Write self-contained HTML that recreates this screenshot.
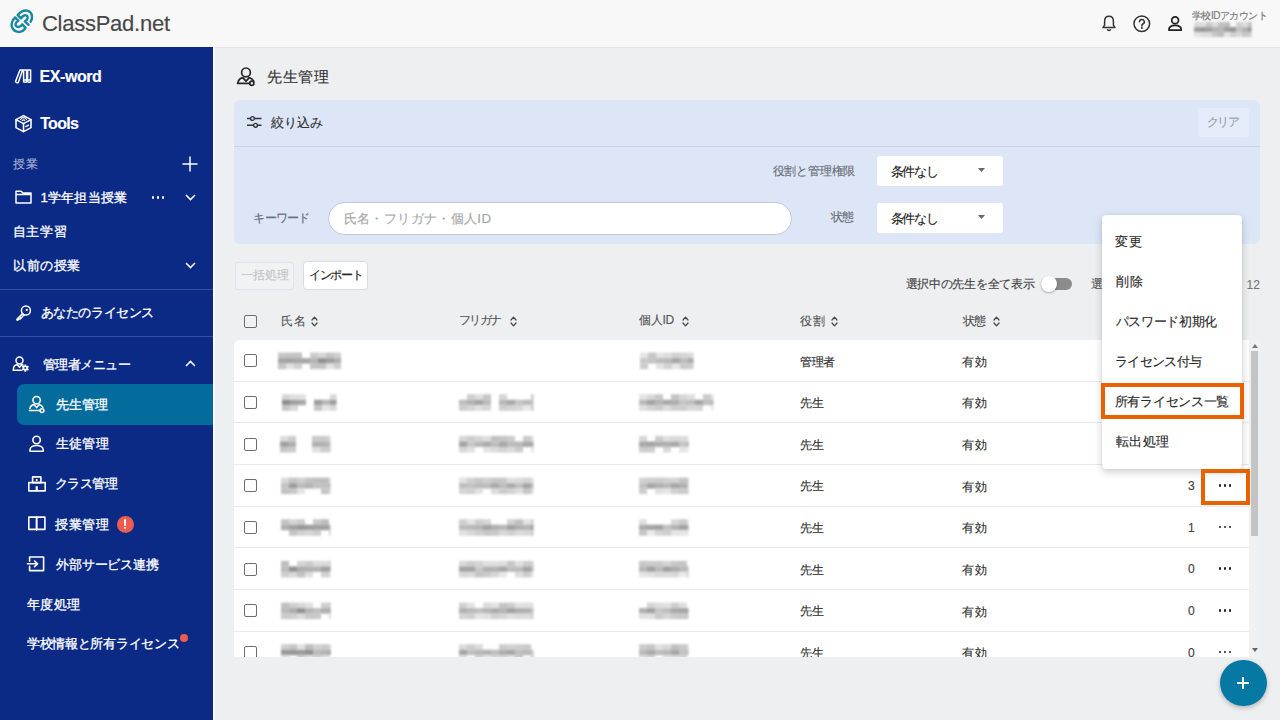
<!DOCTYPE html>
<html lang="ja">
<head>
<meta charset="utf-8">
<style>
*{box-sizing:border-box;margin:0;padding:0}
html,body{width:1280px;height:720px;overflow:hidden}
body{font-family:"Liberation Sans",sans-serif;background:#eeeff1;color:#333;position:relative}
.a{position:absolute}
.t{position:absolute;white-space:nowrap;line-height:1;-webkit-text-stroke:0.15px currentColor}
svg{position:absolute;overflow:visible}
.cb{position:absolute;width:13px;height:13px;border:1.7px solid #6d6d6d;border-radius:2px;background:#fff}
.rowline{position:absolute;left:0;width:1015px;height:1px;background:#e8e9ec}
.cell{font-size:12px;color:#333}
.num{font-size:12px;color:#444}
.dots{position:absolute;width:14px;height:3px}
.dots i{position:absolute;top:0.1px;width:2.7px;height:2.7px;border-radius:50%;background:#1e1e1e}
.dots i:nth-child(1){left:0.1px} .dots i:nth-child(2){left:5.1px} .dots i:nth-child(3){left:10.1px}
.bl{position:absolute;height:8px;background:linear-gradient(90deg,#b5b5b5,#a0a0a0 30%,#b8b8b8 55%,#a5a5a5 80%,#bdbdbd);filter:blur(1.8px);opacity:.9}
.hl{position:absolute;border:4.75px solid #ea6200}
</style>
</head>
<body>
<!-- header -->
<div class="a" style="left:0;top:0;width:1280px;height:47px;background:#f8f8f9;box-shadow:0 0.5px 1.5px rgba(0,0,0,.10)"></div>
<svg style="left:0;top:0" width="44" height="44" viewBox="0 0 44 44">
  <g fill="none" stroke="#1a88a3" stroke-width="2.45" stroke-linecap="round" stroke-linejoin="round">
    <path id="lk" d="M30.7 21.6 C33.2 17.6 32.3 12.3 28 10.9 C24.6 9.8 21 11.4 17.7 15.1 L21 18.4 C22.5 16 24.8 14.4 26.6 15.6 C28.3 16.8 28 19.6 24.9 21.4 L28.5 24.9"/>
    <path d="M15.1 17.5 C11.5 20.5 10.8 25.5 12.6 28.5 C14.6 31.8 19.5 32.8 22.5 31 C23.8 30.2 24.8 29 25.6 27.8 L22.2 24.3 C20.8 26.5 18.3 27.6 16.6 26.5 C14.8 25.3 15.2 22.3 18.4 20.6 Z"/>
  </g>
</svg>
<svg style="left:1102px;top:15px" width="14" height="17" viewBox="0 0 14 17">
  <path d="M7 1.2 C4 1.2 2.6 3.6 2.6 6.4 V10.2 L1 12.6 H13 L11.4 10.2 V6.4 C11.4 3.6 10 1.2 7 1.2 Z" fill="none" stroke="#333" stroke-width="1.5" stroke-linejoin="round"/>
  <path d="M5.3 14.2 a1.8 1.8 0 0 0 3.4 0" fill="none" stroke="#333" stroke-width="1.5"/>
</svg>
<svg style="left:1133px;top:14.5px" width="18" height="18" viewBox="0 0 18 18">
  <circle cx="8.8" cy="8.8" r="7.8" fill="none" stroke="#333" stroke-width="1.5"/>
  <path d="M6.5 6.8 a2.4 2.4 0 1 1 3.4 2.2 c-.7.4-1 .8-1 1.6 v.4" fill="none" stroke="#333" stroke-width="1.5" stroke-linecap="round"/>
  <circle cx="8.9" cy="13" r="0.95" fill="#333"/>
</svg>
<svg style="left:1168px;top:16px" width="15" height="15" viewBox="0 0 15 15">
  <circle cx="7.1" cy="4.3" r="3.4" fill="none" stroke="#222" stroke-width="1.7"/>
  <path d="M0.9 14.1 C0.9 10.8 3.6 9.4 7.1 9.4 C10.6 9.4 13.3 10.8 13.3 14.1 Z" fill="none" stroke="#222" stroke-width="1.7" stroke-linejoin="round"/>
</svg>
<svg style="left:0;top:0" width="1280" height="46" viewBox="0 0 1280 46"><g filter="url(#bf2)"><defs><filter id="bf2" x="-10%" y="-50%" width="120%" height="200%"><feGaussianBlur stdDeviation="1.2"/></filter></defs><rect x="1194.0" y="22.0" width="6.05" height="5.05" fill="rgb(219,219,219)"/><rect x="1194.0" y="27.0" width="6.05" height="5.05" fill="rgb(158,158,158)"/><rect x="1194.0" y="32.0" width="6.05" height="5.05" fill="rgb(228,228,228)"/><rect x="1200.0" y="22.0" width="6.05" height="5.05" fill="rgb(222,222,222)"/><rect x="1200.0" y="27.0" width="6.05" height="5.05" fill="rgb(154,154,154)"/><rect x="1200.0" y="32.0" width="6.05" height="5.05" fill="rgb(220,220,220)"/><rect x="1206.0" y="22.0" width="6.05" height="5.05" fill="rgb(199,199,199)"/><rect x="1206.0" y="27.0" width="6.05" height="5.05" fill="rgb(162,162,162)"/><rect x="1206.0" y="32.0" width="6.05" height="5.05" fill="rgb(220,220,220)"/><rect x="1212.0" y="22.0" width="6.05" height="5.05" fill="rgb(220,220,220)"/><rect x="1212.0" y="27.0" width="6.05" height="5.05" fill="rgb(180,180,180)"/><rect x="1212.0" y="32.0" width="6.05" height="5.05" fill="rgb(199,199,199)"/><rect x="1218.0" y="22.0" width="6.05" height="5.05" fill="rgb(194,194,194)"/><rect x="1218.0" y="27.0" width="6.05" height="5.05" fill="rgb(183,183,183)"/><rect x="1218.0" y="32.0" width="6.05" height="5.05" fill="rgb(190,190,190)"/><rect x="1224.0" y="22.0" width="6.05" height="5.05" fill="rgb(189,189,189)"/><rect x="1224.0" y="27.0" width="6.05" height="5.05" fill="rgb(160,160,160)"/><rect x="1224.0" y="32.0" width="6.05" height="5.05" fill="rgb(227,227,227)"/><rect x="1230.0" y="27.0" width="6.05" height="5.05" fill="rgb(151,151,151)"/><rect x="1230.0" y="32.0" width="6.05" height="5.05" fill="rgb(207,207,207)"/><rect x="1236.0" y="22.0" width="6.05" height="5.05" fill="rgb(209,209,209)"/><rect x="1236.0" y="27.0" width="6.05" height="5.05" fill="rgb(195,195,195)"/><rect x="1236.0" y="32.0" width="6.05" height="5.05" fill="rgb(217,217,217)"/><rect x="1242.0" y="22.0" width="6.05" height="5.05" fill="rgb(221,221,221)"/><rect x="1242.0" y="27.0" width="6.05" height="5.05" fill="rgb(178,178,178)"/><rect x="1242.0" y="32.0" width="6.05" height="5.05" fill="rgb(198,198,198)"/><rect x="1248.0" y="22.0" width="3.55" height="5.05" fill="rgb(191,191,191)"/><rect x="1248.0" y="27.0" width="3.55" height="5.05" fill="rgb(152,152,152)"/><rect x="1248.0" y="32.0" width="3.55" height="5.05" fill="rgb(203,203,203)"/></g></svg>

<!-- sidebar -->
<div class="a" style="left:0;top:47px;width:213px;height:673px;background:#0b2a86"></div>
<div class="a" style="left:213px;top:47px;width:2px;height:673px;background:#fbfbfc"></div>
<svg style="left:14px;top:68px" width="18" height="16" viewBox="0 0 18 16">
  <g fill="none" stroke="#fff" stroke-width="1.5" stroke-linejoin="round">
    <path d="M1.5 13.6 L6 2 H8.6 L4.4 14.2 C3.8 15 2 15 1.5 13.6 Z"/>
    <path d="M9.6 2 H12.6 V13.6 C12.6 14.6 9.6 14.6 9.6 13.6 Z"/>
    <path d="M13.6 2 H16.6 V13.6 C16.6 14.6 13.6 14.6 13.6 13.6 Z"/>
    <path d="M9.6 12 H12.6 M13.6 12 H16.6"/>
  </g>
</svg>
<svg style="left:0;top:100px" width="40" height="40" viewBox="0 100 40 40">
  <g fill="none" stroke="#fff" stroke-width="1.6" stroke-linejoin="round" stroke-linecap="round">
    <path d="M23.5 115.6 L31 119.6 V127.6 L23.5 131.6 L16 127.6 V119.6 Z"/>
    <path d="M16 119.6 L23.5 123.6 L31 119.6"/>
    <path d="M23.5 123.6 V131.6"/>
    <path d="M20.6 119.4 A3.2 3.2 0 0 1 26.4 119.4" stroke-width="1.3"/>
    <path d="M22.3 120.5 A1.4 1.4 0 0 1 24.7 120.5" stroke-width="1.3"/>
    <path d="M25.8 126.6 L28.6 125.1" stroke-width="1.4"/>
  </g>
</svg>
<svg style="left:182px;top:155.5px" width="16" height="16" viewBox="0 0 16 16"><path d="M8 0.5 V15.5 M0.5 8 H15.5" stroke="#fff" stroke-width="1.5"/></svg>
<svg style="left:15px;top:190px" width="17" height="14" viewBox="0 0 17 14">
  <path d="M1 1.2 H6.2 L7.8 3 H16 V13 H1 Z M1 4.6 H16" fill="none" stroke="#fff" stroke-width="1.5" stroke-linejoin="round"/>
</svg>
<div class="dots" style="left:151.5px;top:196px"><i style="background:#fff"></i><i style="background:#fff"></i><i style="background:#fff"></i></div>
<svg style="left:184.5px;top:193.5px" width="11" height="7" viewBox="0 0 11 7"><path d="M1 1 L5.5 5.6 L10 1" fill="none" stroke="#fff" stroke-width="1.5"/></svg>
<svg style="left:184.5px;top:261.5px" width="11" height="7" viewBox="0 0 11 7"><path d="M1 1 L5.5 5.6 L10 1" fill="none" stroke="#fff" stroke-width="1.5"/></svg>
<div class="a" style="left:0;top:289px;width:213px;height:1px;background:#3550a3"></div>
<svg style="left:14px;top:304px" width="18" height="18" viewBox="0 0 18 18">
  <g fill="none" stroke="#fff" stroke-width="1.5" stroke-linejoin="round" stroke-linecap="round">
    <circle cx="11.9" cy="6.5" r="4.5"/>
    <path d="M8.6 9.6 L3.1 15.1 C2.5 15.7 3 16.5 3.7 16.2 L5.6 14.9 L6.4 14.9 L6.8 13.8 L7.8 13.8 L8.2 12.7 L10.3 10.9"/>
  </g>
  <circle cx="12.8" cy="5.9" r="1.1" fill="#fff"/>
</svg>
<div class="a" style="left:0;top:336px;width:213px;height:1px;background:#3550a3"></div>
<svg style="left:12px;top:355px" width="18" height="18" viewBox="0 0 18 18">
  <g fill="none" stroke="#fff" stroke-width="1.5" stroke-linejoin="round" stroke-linecap="round">
    <circle cx="7.5" cy="5.6" r="3.5"/>
    <path d="M1.4 15.2 V14.2 C1.4 11.6 3.2 10 5.4 9.6"/>
    <path d="M9.6 9.6 C10.2 9.7 10.7 9.9 11.1 10.1"/>
    <path d="M5.2 9.8 L7.5 12.1 L9.8 9.8"/>
    <path d="M1.4 15.2 H9.3"/>
  </g>
  <g transform="translate(13.3,13.1)" fill="#fff">
    <circle r="2.7"/>
    <rect x="-0.9" y="-3.7" width="1.8" height="7.4" rx="0.4"/>
    <rect x="-0.9" y="-3.7" width="1.8" height="7.4" rx="0.4" transform="rotate(60)"/>
    <rect x="-0.9" y="-3.7" width="1.8" height="7.4" rx="0.4" transform="rotate(120)"/>
    <circle r="1" fill="#0b2a86"/>
  </g>
</svg>
<svg style="left:21px;top:356px;display:none" width="1" height="1"></svg>
<svg style="left:184.5px;top:359.5px" width="11" height="7" viewBox="0 0 11 7"><path d="M1 6 L5.5 1.4 L10 6" fill="none" stroke="#fff" stroke-width="1.5"/></svg>
<div class="a" style="left:17px;top:384px;width:196px;height:40.5px;background:#046c9d;border-radius:7px 0 0 7px"></div>
<svg style="left:28px;top:395px" width="18" height="18" viewBox="0 0 18 18">
  <g fill="none" stroke="#fff" stroke-width="1.5" stroke-linejoin="round" stroke-linecap="round">
    <circle cx="8.6" cy="5.2" r="3.7"/>
    <path d="M1.9 13.6 C2.2 11.3 3.9 9.8 6.1 9.4"/>
    <path d="M11.1 9.4 C12.9 9.8 14.2 10.8 14.9 12.4"/>
    <path d="M5.9 9.5 L8.6 12.6 L11.3 9.5"/>
    <path d="M1.4 15.6 H12.1"/>
    <circle cx="14" cy="15.6" r="1.9"/>
  </g>
</svg>
<svg style="left:28px;top:435px" width="18" height="18" viewBox="0 0 18 18">
  <g fill="none" stroke="#fff" stroke-width="1.6" stroke-linejoin="round">
    <circle cx="8.6" cy="5" r="3.7"/>
    <path d="M2 16.2 V14.9 C2 12.2 4.9 10.5 8.6 10.5 C12.3 10.5 15.2 12.2 15.2 14.9 V16.2 Z"/>
  </g>
</svg>
<svg style="left:28px;top:476px" width="18" height="16" viewBox="0 0 18 16">
  <g fill="none" stroke="#fff" stroke-width="1.6" stroke-linejoin="round">
    <path d="M4.6 0.9 H12.9 V6.6 H4.6 Z"/>
    <path d="M0.8 6.6 H17.2 V14.9 H0.8 Z"/>
  </g>
  <circle cx="8.7" cy="4.1" r="1.05" fill="#fff"/>
  <path d="M8.7 10.2 V14.9" stroke="#fff" stroke-width="2.2"/>
</svg>
<svg style="left:28px;top:516px" width="18" height="17" viewBox="0 0 18 17">
  <g fill="none" stroke="#fff" stroke-width="1.6" stroke-linejoin="round">
    <path d="M0.8 1.1 H8.6 V13.4 H0.8 Z"/>
    <path d="M8.6 1.1 H16.9 V13.4 H8.6 Z"/>
  </g>
  <path d="M7.4 13.4 H9.8 L8.6 15.3 Z" fill="#fff"/>
</svg>
<div class="a" style="left:116.7px;top:515.8px;width:17px;height:17px;border-radius:50%;background:#ee5b50"></div>
<div class="a" style="left:124.2px;top:519.3px;width:2px;height:6.5px;background:#fff;border-radius:1px"></div>
<div class="a" style="left:124.1px;top:526.8px;width:2.2px;height:2.2px;background:#fff;border-radius:50%"></div>
<svg style="left:26px;top:555px" width="20" height="18" viewBox="0 0 20 18">
  <g fill="none" stroke="#fff" stroke-width="1.6" stroke-linejoin="round" stroke-linecap="round">
    <path d="M3.6 6.2 V2 H17.6 V15.6 H3.6 V11.4"/>
    <path d="M1.4 8.8 H11.4 M8.6 6 L11.5 8.8 L8.6 11.6"/>
  </g>
</svg>
<div class="a" style="left:179.7px;top:634.3px;width:8px;height:8px;border-radius:50%;background:#ec5a50"></div>

<!-- main title -->
<svg style="left:236px;top:65px" width="20" height="21" viewBox="0 0 20 21">
  <g fill="none" stroke="#262626" stroke-width="1.7" stroke-linejoin="round" stroke-linecap="round">
    <circle cx="10" cy="7.4" r="4.4"/>
    <path d="M1.9 18 C2.3 15.2 4.2 13.3 6.9 12.7"/>
    <path d="M13.1 12.7 C15.3 13.2 16.9 14.4 17.7 16.1"/>
    <path d="M6.9 12.9 L10 16.1 L13.1 12.9"/>
    <path d="M1.5 18.3 H13.6"/>
    <circle cx="15.8" cy="18.3" r="2.1"/>
  </g>
</svg>

<!-- filter panel -->
<div class="a" style="left:234px;top:100px;width:1026px;height:143.5px;background:#dce6f7;border-radius:6px"></div>
<div class="a" style="left:234px;top:146px;width:1026px;height:1px;background:#c8d3e6"></div>
<svg style="left:247px;top:115.5px" width="15" height="12" viewBox="0 0 15 12">
  <g fill="none" stroke="#333" stroke-width="1.4">
    <path d="M0 2.5 H3.6 M7.4 2.5 H14.5"/><circle cx="5.5" cy="2.5" r="1.9"/>
    <path d="M0 9.3 H6.6 M10.4 9.3 H14.5"/><circle cx="8.5" cy="9.3" r="1.9"/>
  </g>
</svg>
<div class="a" style="left:1198px;top:108px;width:51px;height:29px;background:#e4ecfa;border-radius:3px"></div>
<div class="a" style="left:877px;top:156px;width:126px;height:30px;background:#fff;border-radius:3px"></div>
<svg style="left:978px;top:168.2px" width="7" height="4" viewBox="0 0 7 4"><path d="M0 0 H7 L3.5 4 Z" fill="#666"/></svg>
<div class="a" style="left:328px;top:201.5px;width:464px;height:33px;background:#fff;border:1px solid #c3c8d0;border-radius:17px"></div>
<div class="a" style="left:877px;top:203px;width:126px;height:30px;background:#fff;border-radius:3px"></div>
<svg style="left:978px;top:215px" width="7" height="4" viewBox="0 0 7 4"><path d="M0 0 H7 L3.5 4 Z" fill="#666"/></svg>

<!-- buttons -->
<div class="a" style="left:235px;top:261.5px;width:59px;height:28px;background:#f1f2f4;border:1px solid #e3e4e7;border-radius:3px"></div>
<div class="a" style="left:303px;top:260.5px;width:65px;height:29px;background:#fff;border:1px solid #dadbde;border-radius:4px"></div>
<div class="a" style="left:1041px;top:277.5px;width:31px;height:12px;border-radius:6px;background:#8c8c8c"></div>
<div class="a" style="left:1041px;top:276.2px;width:16px;height:16px;border-radius:50%;background:#fff;box-shadow:0 1px 2.5px rgba(0,0,0,.3)"></div>

<!-- table header -->
<div class="cb" style="left:244px;top:315.3px;background:#f2f2f2"></div>
<svg style="left:311px;top:316px" width="7" height="11" viewBox="0 0 7 11"><path d="M1 4 L3.5 1.2 L6 4 M1 7 L3.5 9.8 L6 7" fill="none" stroke="#444" stroke-width="1.25" stroke-linecap="round" stroke-linejoin="round"/></svg>
<svg style="left:509.5px;top:316px" width="7" height="11" viewBox="0 0 7 11"><path d="M1 4 L3.5 1.2 L6 4 M1 7 L3.5 9.8 L6 7" fill="none" stroke="#444" stroke-width="1.25" stroke-linecap="round" stroke-linejoin="round"/></svg>
<svg style="left:681.5px;top:316px" width="7" height="11" viewBox="0 0 7 11"><path d="M1 4 L3.5 1.2 L6 4 M1 7 L3.5 9.8 L6 7" fill="none" stroke="#444" stroke-width="1.25" stroke-linecap="round" stroke-linejoin="round"/></svg>
<svg style="left:830.5px;top:316px" width="7" height="11" viewBox="0 0 7 11"><path d="M1 4 L3.5 1.2 L6 4 M1 7 L3.5 9.8 L6 7" fill="none" stroke="#444" stroke-width="1.25" stroke-linecap="round" stroke-linejoin="round"/></svg>
<svg style="left:993px;top:316px" width="7" height="11" viewBox="0 0 7 11"><path d="M1 4 L3.5 1.2 L6 4 M1 7 L3.5 9.8 L6 7" fill="none" stroke="#444" stroke-width="1.25" stroke-linecap="round" stroke-linejoin="round"/></svg>

<!-- table -->
<div class="a" style="left:234px;top:340px;width:1015px;height:317px;overflow:hidden;background:#fff;border-radius:6px 0 0 0">
<div class="cb" style="left:10px;top:14.33px"></div>
<div id="c_role0" class="t cell" style="left:566.00px;top:15.58px;letter-spacing:-0.350px">管理者</div>
<div id="c_stat" class="t cell" style="left:728.00px;top:15.78px;letter-spacing:1.400px">有効</div>
<div class="rowline" style="top:40.67px"></div>
<div class="cb" style="left:10px;top:56.00px"></div>
<div id="c_role1" class="t cell" style="left:566.00px;top:57.00px;letter-spacing:0.000px">先生</div>
<div class="t cell" style="left:728.00px;top:57.45px;letter-spacing:1.400px">有効</div>
<div class="rowline" style="top:82.33px"></div>
<div class="cb" style="left:10px;top:97.66px"></div>
<div class="t cell" style="left:566.00px;top:98.66px;letter-spacing:0.000px">先生</div>
<div class="t cell" style="left:728.00px;top:99.11px;letter-spacing:1.400px">有効</div>
<div class="rowline" style="top:124.00px"></div>
<div class="cb" style="left:10px;top:139.33px"></div>
<div class="t cell" style="left:566.00px;top:140.33px;letter-spacing:0.000px">先生</div>
<div class="t cell" style="left:728.00px;top:140.78px;letter-spacing:1.400px">有効</div>
<div class="t num" style="left:954.00px;top:140.06px">3</div>
<div class="dots" style="left:984.60px;top:143.83px"><i></i><i></i><i></i></div>
<div class="rowline" style="top:165.67px"></div>
<div class="cb" style="left:10px;top:181.00px"></div>
<div class="t cell" style="left:566.00px;top:182.00px;letter-spacing:0.000px">先生</div>
<div class="t cell" style="left:728.00px;top:182.45px;letter-spacing:1.400px">有効</div>
<div id="c_num" class="t num" style="left:954.00px;top:181.72px">1</div>
<div class="dots" style="left:984.60px;top:185.50px"><i></i><i></i><i></i></div>
<div class="rowline" style="top:207.33px"></div>
<div class="cb" style="left:10px;top:222.66px"></div>
<div class="t cell" style="left:566.00px;top:223.66px;letter-spacing:0.000px">先生</div>
<div class="t cell" style="left:728.00px;top:224.11px;letter-spacing:1.400px">有効</div>
<div class="t num" style="left:954.00px;top:223.39px">0</div>
<div class="dots" style="left:984.60px;top:227.16px"><i></i><i></i><i></i></div>
<div class="rowline" style="top:249.00px"></div>
<div class="cb" style="left:10px;top:264.33px"></div>
<div class="t cell" style="left:566.00px;top:265.33px;letter-spacing:0.000px">先生</div>
<div class="t cell" style="left:728.00px;top:265.78px;letter-spacing:1.400px">有効</div>
<div class="t num" style="left:954.00px;top:265.06px">0</div>
<div class="dots" style="left:984.60px;top:268.83px"><i></i><i></i><i></i></div>
<div class="rowline" style="top:290.67px"></div>
<div class="cb" style="left:10px;top:306.00px"></div>
<div class="t cell" style="left:566.00px;top:307.00px;letter-spacing:0.000px">先生</div>
<div class="t cell" style="left:728.00px;top:307.45px;letter-spacing:1.400px">有効</div>
<div class="t num" style="left:954.00px;top:306.72px">0</div>
<div class="dots" style="left:984.60px;top:310.50px"><i></i><i></i><i></i></div>
</div>

<svg style="left:0;top:0" width="1280" height="720" viewBox="0 0 1280 720"><defs><filter id="bf" x="-5%" y="-50%" width="110%" height="200%"><feGaussianBlur stdDeviation="1.3"/></filter><clipPath id="tc"><rect x="234" y="340" width="1015" height="317"/></clipPath></defs><g clip-path="url(#tc)" filter="url(#bf)"><rect x="278.0" y="352.6" width="8.05" height="5.55" fill="rgb(197,197,197)"/><rect x="278.0" y="358.1" width="8.05" height="5.55" fill="rgb(165,165,165)"/><rect x="278.0" y="363.6" width="8.05" height="5.55" fill="rgb(197,197,197)"/><rect x="286.0" y="352.6" width="8.05" height="5.55" fill="rgb(194,194,194)"/><rect x="286.0" y="358.1" width="8.05" height="5.55" fill="rgb(163,163,163)"/><rect x="286.0" y="363.6" width="8.05" height="5.55" fill="rgb(225,225,225)"/><rect x="294.0" y="352.6" width="8.05" height="5.55" fill="rgb(193,193,193)"/><rect x="294.0" y="358.1" width="8.05" height="5.55" fill="rgb(167,167,167)"/><rect x="294.0" y="363.6" width="8.05" height="5.55" fill="rgb(208,208,208)"/><rect x="302.0" y="358.1" width="8.05" height="5.55" fill="rgb(167,167,167)"/><rect x="310.0" y="352.6" width="8.05" height="5.55" fill="rgb(202,202,202)"/><rect x="310.0" y="358.1" width="8.05" height="5.55" fill="rgb(180,180,180)"/><rect x="310.0" y="363.6" width="8.05" height="5.55" fill="rgb(196,196,196)"/><rect x="318.0" y="352.6" width="8.05" height="5.55" fill="rgb(213,213,213)"/><rect x="318.0" y="358.1" width="8.05" height="5.55" fill="rgb(143,143,143)"/><rect x="318.0" y="363.6" width="8.05" height="5.55" fill="rgb(195,195,195)"/><rect x="326.0" y="352.6" width="8.05" height="5.55" fill="rgb(196,196,196)"/><rect x="326.0" y="358.1" width="8.05" height="5.55" fill="rgb(158,158,158)"/><rect x="326.0" y="363.6" width="8.05" height="5.55" fill="rgb(227,227,227)"/><rect x="334.0" y="352.6" width="7.05" height="5.55" fill="rgb(207,207,207)"/><rect x="334.0" y="358.1" width="7.05" height="5.55" fill="rgb(175,175,175)"/><rect x="334.0" y="363.6" width="7.05" height="5.55" fill="rgb(204,204,204)"/><rect x="640.0" y="352.6" width="8.05" height="5.55" fill="rgb(228,228,228)"/><rect x="640.0" y="358.1" width="8.05" height="5.55" fill="rgb(200,200,200)"/><rect x="640.0" y="363.6" width="8.05" height="5.55" fill="rgb(203,203,203)"/><rect x="648.0" y="352.6" width="8.05" height="5.55" fill="rgb(196,196,196)"/><rect x="648.0" y="358.1" width="8.05" height="5.55" fill="rgb(196,196,196)"/><rect x="656.0" y="352.6" width="8.05" height="5.55" fill="rgb(226,226,226)"/><rect x="656.0" y="358.1" width="8.05" height="5.55" fill="rgb(187,187,187)"/><rect x="656.0" y="363.6" width="8.05" height="5.55" fill="rgb(226,226,226)"/><rect x="664.0" y="352.6" width="8.05" height="5.55" fill="rgb(221,221,221)"/><rect x="664.0" y="358.1" width="8.05" height="5.55" fill="rgb(183,183,183)"/><rect x="664.0" y="363.6" width="8.05" height="5.55" fill="rgb(208,208,208)"/><rect x="672.0" y="352.6" width="8.05" height="5.55" fill="rgb(207,207,207)"/><rect x="672.0" y="358.1" width="8.05" height="5.55" fill="rgb(165,165,165)"/><rect x="672.0" y="363.6" width="8.05" height="5.55" fill="rgb(230,230,230)"/><rect x="680.0" y="352.6" width="8.05" height="5.55" fill="rgb(213,213,213)"/><rect x="680.0" y="358.1" width="8.05" height="5.55" fill="rgb(188,188,188)"/><rect x="680.0" y="363.6" width="8.05" height="5.55" fill="rgb(201,201,201)"/><rect x="688.0" y="352.6" width="5.55" height="5.55" fill="rgb(218,218,218)"/><rect x="688.0" y="358.1" width="5.55" height="5.55" fill="rgb(170,170,170)"/><rect x="688.0" y="363.6" width="5.55" height="5.55" fill="rgb(206,206,206)"/><rect x="282.0" y="394.2" width="8.05" height="5.55" fill="rgb(214,214,214)"/><rect x="282.0" y="399.7" width="8.05" height="5.55" fill="rgb(142,142,142)"/><rect x="282.0" y="405.2" width="8.05" height="5.55" fill="rgb(197,197,197)"/><rect x="290.0" y="394.2" width="8.05" height="5.55" fill="rgb(224,224,224)"/><rect x="290.0" y="399.7" width="8.05" height="5.55" fill="rgb(160,160,160)"/><rect x="290.0" y="405.2" width="8.05" height="5.55" fill="rgb(215,215,215)"/><rect x="298.0" y="394.2" width="8.05" height="5.55" fill="rgb(225,225,225)"/><rect x="298.0" y="399.7" width="8.05" height="5.55" fill="rgb(169,169,169)"/><rect x="314.0" y="399.7" width="8.05" height="5.55" fill="rgb(157,157,157)"/><rect x="314.0" y="405.2" width="8.05" height="5.55" fill="rgb(197,197,197)"/><rect x="322.0" y="399.7" width="8.05" height="5.55" fill="rgb(184,184,184)"/><rect x="322.0" y="405.2" width="8.05" height="5.55" fill="rgb(229,229,229)"/><rect x="330.0" y="394.2" width="6.55" height="5.55" fill="rgb(216,216,216)"/><rect x="330.0" y="399.7" width="6.55" height="5.55" fill="rgb(158,158,158)"/><rect x="330.0" y="405.2" width="6.55" height="5.55" fill="rgb(215,215,215)"/><rect x="459.0" y="399.7" width="8.05" height="5.55" fill="rgb(189,189,189)"/><rect x="459.0" y="405.2" width="8.05" height="5.55" fill="rgb(204,204,204)"/><rect x="467.0" y="394.2" width="8.05" height="5.55" fill="rgb(205,205,205)"/><rect x="467.0" y="399.7" width="8.05" height="5.55" fill="rgb(178,178,178)"/><rect x="467.0" y="405.2" width="8.05" height="5.55" fill="rgb(212,212,212)"/><rect x="475.0" y="394.2" width="8.05" height="5.55" fill="rgb(223,223,223)"/><rect x="475.0" y="399.7" width="8.05" height="5.55" fill="rgb(165,165,165)"/><rect x="475.0" y="405.2" width="8.05" height="5.55" fill="rgb(222,222,222)"/><rect x="483.0" y="394.2" width="8.05" height="5.55" fill="rgb(200,200,200)"/><rect x="483.0" y="399.7" width="8.05" height="5.55" fill="rgb(187,187,187)"/><rect x="483.0" y="405.2" width="8.05" height="5.55" fill="rgb(214,214,214)"/><rect x="499.0" y="394.2" width="8.05" height="5.55" fill="rgb(214,214,214)"/><rect x="499.0" y="399.7" width="8.05" height="5.55" fill="rgb(184,184,184)"/><rect x="499.0" y="405.2" width="8.05" height="5.55" fill="rgb(206,206,206)"/><rect x="507.0" y="399.7" width="8.05" height="5.55" fill="rgb(169,169,169)"/><rect x="507.0" y="405.2" width="8.05" height="5.55" fill="rgb(211,211,211)"/><rect x="515.0" y="399.7" width="8.05" height="5.55" fill="rgb(197,197,197)"/><rect x="515.0" y="405.2" width="8.05" height="5.55" fill="rgb(215,215,215)"/><rect x="523.0" y="399.7" width="8.05" height="5.55" fill="rgb(186,186,186)"/><rect x="523.0" y="405.2" width="8.05" height="5.55" fill="rgb(233,233,233)"/><rect x="531.0" y="394.2" width="2.55" height="5.55" fill="rgb(200,200,200)"/><rect x="531.0" y="399.7" width="2.55" height="5.55" fill="rgb(192,192,192)"/><rect x="531.0" y="405.2" width="2.55" height="5.55" fill="rgb(200,200,200)"/><rect x="639.0" y="394.2" width="8.05" height="5.55" fill="rgb(227,227,227)"/><rect x="639.0" y="399.7" width="8.05" height="5.55" fill="rgb(185,185,185)"/><rect x="639.0" y="405.2" width="8.05" height="5.55" fill="rgb(222,222,222)"/><rect x="647.0" y="394.2" width="8.05" height="5.55" fill="rgb(217,217,217)"/><rect x="647.0" y="399.7" width="8.05" height="5.55" fill="rgb(163,163,163)"/><rect x="647.0" y="405.2" width="8.05" height="5.55" fill="rgb(210,210,210)"/><rect x="655.0" y="394.2" width="8.05" height="5.55" fill="rgb(199,199,199)"/><rect x="655.0" y="399.7" width="8.05" height="5.55" fill="rgb(181,181,181)"/><rect x="655.0" y="405.2" width="8.05" height="5.55" fill="rgb(203,203,203)"/><rect x="663.0" y="399.7" width="8.05" height="5.55" fill="rgb(169,169,169)"/><rect x="663.0" y="405.2" width="8.05" height="5.55" fill="rgb(220,220,220)"/><rect x="671.0" y="394.2" width="8.05" height="5.55" fill="rgb(196,196,196)"/><rect x="671.0" y="399.7" width="8.05" height="5.55" fill="rgb(173,173,173)"/><rect x="671.0" y="405.2" width="8.05" height="5.55" fill="rgb(206,206,206)"/><rect x="679.0" y="394.2" width="8.05" height="5.55" fill="rgb(214,214,214)"/><rect x="679.0" y="399.7" width="8.05" height="5.55" fill="rgb(198,198,198)"/><rect x="679.0" y="405.2" width="8.05" height="5.55" fill="rgb(204,204,204)"/><rect x="687.0" y="394.2" width="8.05" height="5.55" fill="rgb(223,223,223)"/><rect x="687.0" y="399.7" width="8.05" height="5.55" fill="rgb(189,189,189)"/><rect x="687.0" y="405.2" width="8.05" height="5.55" fill="rgb(216,216,216)"/><rect x="695.0" y="399.7" width="8.05" height="5.55" fill="rgb(166,166,166)"/><rect x="695.0" y="405.2" width="8.05" height="5.55" fill="rgb(213,213,213)"/><rect x="703.0" y="394.2" width="8.05" height="5.55" fill="rgb(202,202,202)"/><rect x="703.0" y="399.7" width="8.05" height="5.55" fill="rgb(193,193,193)"/><rect x="711.0" y="394.2" width="2.55" height="5.55" fill="rgb(225,225,225)"/><rect x="711.0" y="399.7" width="2.55" height="5.55" fill="rgb(183,183,183)"/><rect x="711.0" y="405.2" width="2.55" height="5.55" fill="rgb(231,231,231)"/><rect x="280.0" y="435.9" width="8.05" height="5.55" fill="rgb(221,221,221)"/><rect x="280.0" y="441.4" width="8.05" height="5.55" fill="rgb(159,159,159)"/><rect x="280.0" y="446.9" width="8.05" height="5.55" fill="rgb(198,198,198)"/><rect x="288.0" y="435.9" width="8.05" height="5.55" fill="rgb(204,204,204)"/><rect x="288.0" y="441.4" width="8.05" height="5.55" fill="rgb(173,173,173)"/><rect x="288.0" y="446.9" width="8.05" height="5.55" fill="rgb(203,203,203)"/><rect x="312.0" y="435.9" width="8.05" height="5.55" fill="rgb(202,202,202)"/><rect x="312.0" y="441.4" width="8.05" height="5.55" fill="rgb(174,174,174)"/><rect x="312.0" y="446.9" width="8.05" height="5.55" fill="rgb(225,225,225)"/><rect x="320.0" y="435.9" width="8.05" height="5.55" fill="rgb(202,202,202)"/><rect x="320.0" y="441.4" width="8.05" height="5.55" fill="rgb(179,179,179)"/><rect x="320.0" y="446.9" width="8.05" height="5.55" fill="rgb(205,205,205)"/><rect x="328.0" y="435.9" width="2.55" height="5.55" fill="rgb(213,213,213)"/><rect x="328.0" y="441.4" width="2.55" height="5.55" fill="rgb(187,187,187)"/><rect x="328.0" y="446.9" width="2.55" height="5.55" fill="rgb(205,205,205)"/><rect x="459.0" y="435.9" width="8.05" height="5.55" fill="rgb(214,214,214)"/><rect x="459.0" y="441.4" width="8.05" height="5.55" fill="rgb(161,161,161)"/><rect x="459.0" y="446.9" width="8.05" height="5.55" fill="rgb(214,214,214)"/><rect x="467.0" y="435.9" width="8.05" height="5.55" fill="rgb(204,204,204)"/><rect x="467.0" y="441.4" width="8.05" height="5.55" fill="rgb(198,198,198)"/><rect x="467.0" y="446.9" width="8.05" height="5.55" fill="rgb(225,225,225)"/><rect x="475.0" y="435.9" width="8.05" height="5.55" fill="rgb(214,214,214)"/><rect x="475.0" y="441.4" width="8.05" height="5.55" fill="rgb(183,183,183)"/><rect x="483.0" y="435.9" width="8.05" height="5.55" fill="rgb(222,222,222)"/><rect x="483.0" y="441.4" width="8.05" height="5.55" fill="rgb(172,172,172)"/><rect x="483.0" y="446.9" width="8.05" height="5.55" fill="rgb(227,227,227)"/><rect x="491.0" y="435.9" width="8.05" height="5.55" fill="rgb(192,192,192)"/><rect x="491.0" y="441.4" width="8.05" height="5.55" fill="rgb(190,190,190)"/><rect x="491.0" y="446.9" width="8.05" height="5.55" fill="rgb(219,219,219)"/><rect x="499.0" y="435.9" width="8.05" height="5.55" fill="rgb(197,197,197)"/><rect x="499.0" y="441.4" width="8.05" height="5.55" fill="rgb(167,167,167)"/><rect x="499.0" y="446.9" width="8.05" height="5.55" fill="rgb(209,209,209)"/><rect x="507.0" y="435.9" width="8.05" height="5.55" fill="rgb(203,203,203)"/><rect x="507.0" y="441.4" width="8.05" height="5.55" fill="rgb(187,187,187)"/><rect x="507.0" y="446.9" width="8.05" height="5.55" fill="rgb(218,218,218)"/><rect x="515.0" y="441.4" width="8.05" height="5.55" fill="rgb(185,185,185)"/><rect x="515.0" y="446.9" width="8.05" height="5.55" fill="rgb(202,202,202)"/><rect x="523.0" y="435.9" width="8.05" height="5.55" fill="rgb(202,202,202)"/><rect x="523.0" y="441.4" width="8.05" height="5.55" fill="rgb(168,168,168)"/><rect x="531.0" y="435.9" width="2.55" height="5.55" fill="rgb(221,221,221)"/><rect x="531.0" y="441.4" width="2.55" height="5.55" fill="rgb(169,169,169)"/><rect x="531.0" y="446.9" width="2.55" height="5.55" fill="rgb(227,227,227)"/><rect x="639.0" y="435.9" width="8.05" height="5.55" fill="rgb(214,214,214)"/><rect x="639.0" y="441.4" width="8.05" height="5.55" fill="rgb(169,169,169)"/><rect x="639.0" y="446.9" width="8.05" height="5.55" fill="rgb(205,205,205)"/><rect x="647.0" y="441.4" width="8.05" height="5.55" fill="rgb(166,166,166)"/><rect x="647.0" y="446.9" width="8.05" height="5.55" fill="rgb(205,205,205)"/><rect x="655.0" y="435.9" width="8.05" height="5.55" fill="rgb(204,204,204)"/><rect x="655.0" y="441.4" width="8.05" height="5.55" fill="rgb(173,173,173)"/><rect x="663.0" y="435.9" width="8.05" height="5.55" fill="rgb(224,224,224)"/><rect x="663.0" y="441.4" width="8.05" height="5.55" fill="rgb(175,175,175)"/><rect x="663.0" y="446.9" width="8.05" height="5.55" fill="rgb(217,217,217)"/><rect x="671.0" y="435.9" width="8.05" height="5.55" fill="rgb(218,218,218)"/><rect x="671.0" y="441.4" width="8.05" height="5.55" fill="rgb(168,168,168)"/><rect x="679.0" y="435.9" width="8.05" height="5.55" fill="rgb(221,221,221)"/><rect x="679.0" y="441.4" width="8.05" height="5.55" fill="rgb(197,197,197)"/><rect x="679.0" y="446.9" width="8.05" height="5.55" fill="rgb(230,230,230)"/><rect x="687.0" y="435.9" width="1.55" height="5.55" fill="rgb(224,224,224)"/><rect x="687.0" y="441.4" width="1.55" height="5.55" fill="rgb(168,168,168)"/><rect x="687.0" y="446.9" width="1.55" height="5.55" fill="rgb(230,230,230)"/><rect x="281.0" y="477.6" width="8.05" height="5.55" fill="rgb(216,216,216)"/><rect x="281.0" y="483.1" width="8.05" height="5.55" fill="rgb(194,194,194)"/><rect x="281.0" y="488.6" width="8.05" height="5.55" fill="rgb(193,193,193)"/><rect x="289.0" y="477.6" width="8.05" height="5.55" fill="rgb(197,197,197)"/><rect x="289.0" y="483.1" width="8.05" height="5.55" fill="rgb(156,156,156)"/><rect x="289.0" y="488.6" width="8.05" height="5.55" fill="rgb(200,200,200)"/><rect x="297.0" y="477.6" width="8.05" height="5.55" fill="rgb(208,208,208)"/><rect x="297.0" y="483.1" width="8.05" height="5.55" fill="rgb(188,188,188)"/><rect x="297.0" y="488.6" width="8.05" height="5.55" fill="rgb(228,228,228)"/><rect x="305.0" y="477.6" width="8.05" height="5.55" fill="rgb(194,194,194)"/><rect x="305.0" y="483.1" width="8.05" height="5.55" fill="rgb(180,180,180)"/><rect x="313.0" y="477.6" width="8.05" height="5.55" fill="rgb(190,190,190)"/><rect x="313.0" y="483.1" width="8.05" height="5.55" fill="rgb(194,194,194)"/><rect x="321.0" y="477.6" width="8.05" height="5.55" fill="rgb(189,189,189)"/><rect x="321.0" y="483.1" width="8.05" height="5.55" fill="rgb(193,193,193)"/><rect x="321.0" y="488.6" width="8.05" height="5.55" fill="rgb(197,197,197)"/><rect x="329.0" y="477.6" width="1.55" height="5.55" fill="rgb(220,220,220)"/><rect x="329.0" y="483.1" width="1.55" height="5.55" fill="rgb(183,183,183)"/><rect x="329.0" y="488.6" width="1.55" height="5.55" fill="rgb(210,210,210)"/><rect x="459.0" y="477.6" width="8.05" height="5.55" fill="rgb(226,226,226)"/><rect x="459.0" y="483.1" width="8.05" height="5.55" fill="rgb(190,190,190)"/><rect x="459.0" y="488.6" width="8.05" height="5.55" fill="rgb(212,212,212)"/><rect x="467.0" y="477.6" width="8.05" height="5.55" fill="rgb(208,208,208)"/><rect x="467.0" y="483.1" width="8.05" height="5.55" fill="rgb(195,195,195)"/><rect x="467.0" y="488.6" width="8.05" height="5.55" fill="rgb(209,209,209)"/><rect x="475.0" y="477.6" width="8.05" height="5.55" fill="rgb(200,200,200)"/><rect x="475.0" y="483.1" width="8.05" height="5.55" fill="rgb(186,186,186)"/><rect x="475.0" y="488.6" width="8.05" height="5.55" fill="rgb(225,225,225)"/><rect x="483.0" y="477.6" width="8.05" height="5.55" fill="rgb(207,207,207)"/><rect x="483.0" y="483.1" width="8.05" height="5.55" fill="rgb(187,187,187)"/><rect x="491.0" y="477.6" width="8.05" height="5.55" fill="rgb(199,199,199)"/><rect x="491.0" y="483.1" width="8.05" height="5.55" fill="rgb(169,169,169)"/><rect x="491.0" y="488.6" width="8.05" height="5.55" fill="rgb(220,220,220)"/><rect x="499.0" y="477.6" width="8.05" height="5.55" fill="rgb(200,200,200)"/><rect x="499.0" y="483.1" width="8.05" height="5.55" fill="rgb(189,189,189)"/><rect x="499.0" y="488.6" width="8.05" height="5.55" fill="rgb(203,203,203)"/><rect x="507.0" y="477.6" width="8.05" height="5.55" fill="rgb(223,223,223)"/><rect x="507.0" y="483.1" width="8.05" height="5.55" fill="rgb(170,170,170)"/><rect x="507.0" y="488.6" width="8.05" height="5.55" fill="rgb(211,211,211)"/><rect x="515.0" y="477.6" width="8.05" height="5.55" fill="rgb(219,219,219)"/><rect x="515.0" y="483.1" width="8.05" height="5.55" fill="rgb(192,192,192)"/><rect x="515.0" y="488.6" width="8.05" height="5.55" fill="rgb(223,223,223)"/><rect x="523.0" y="477.6" width="8.05" height="5.55" fill="rgb(212,212,212)"/><rect x="523.0" y="483.1" width="8.05" height="5.55" fill="rgb(165,165,165)"/><rect x="523.0" y="488.6" width="8.05" height="5.55" fill="rgb(198,198,198)"/><rect x="531.0" y="477.6" width="2.55" height="5.55" fill="rgb(221,221,221)"/><rect x="531.0" y="483.1" width="2.55" height="5.55" fill="rgb(188,188,188)"/><rect x="531.0" y="488.6" width="2.55" height="5.55" fill="rgb(221,221,221)"/><rect x="639.0" y="477.6" width="8.05" height="5.55" fill="rgb(210,210,210)"/><rect x="639.0" y="483.1" width="8.05" height="5.55" fill="rgb(192,192,192)"/><rect x="639.0" y="488.6" width="8.05" height="5.55" fill="rgb(204,204,204)"/><rect x="647.0" y="477.6" width="8.05" height="5.55" fill="rgb(206,206,206)"/><rect x="647.0" y="483.1" width="8.05" height="5.55" fill="rgb(166,166,166)"/><rect x="655.0" y="477.6" width="8.05" height="5.55" fill="rgb(203,203,203)"/><rect x="655.0" y="483.1" width="8.05" height="5.55" fill="rgb(177,177,177)"/><rect x="655.0" y="488.6" width="8.05" height="5.55" fill="rgb(224,224,224)"/><rect x="663.0" y="477.6" width="8.05" height="5.55" fill="rgb(208,208,208)"/><rect x="663.0" y="483.1" width="8.05" height="5.55" fill="rgb(185,185,185)"/><rect x="663.0" y="488.6" width="8.05" height="5.55" fill="rgb(229,229,229)"/><rect x="671.0" y="477.6" width="8.05" height="5.55" fill="rgb(212,212,212)"/><rect x="671.0" y="483.1" width="8.05" height="5.55" fill="rgb(165,165,165)"/><rect x="671.0" y="488.6" width="8.05" height="5.55" fill="rgb(208,208,208)"/><rect x="679.0" y="477.6" width="8.05" height="5.55" fill="rgb(196,196,196)"/><rect x="679.0" y="483.1" width="8.05" height="5.55" fill="rgb(177,177,177)"/><rect x="679.0" y="488.6" width="8.05" height="5.55" fill="rgb(202,202,202)"/><rect x="687.0" y="477.6" width="1.55" height="5.55" fill="rgb(197,197,197)"/><rect x="687.0" y="483.1" width="1.55" height="5.55" fill="rgb(198,198,198)"/><rect x="687.0" y="488.6" width="1.55" height="5.55" fill="rgb(201,201,201)"/><rect x="281.0" y="519.2" width="8.05" height="5.55" fill="rgb(195,195,195)"/><rect x="281.0" y="524.7" width="8.05" height="5.55" fill="rgb(174,174,174)"/><rect x="289.0" y="519.2" width="8.05" height="5.55" fill="rgb(214,214,214)"/><rect x="289.0" y="524.7" width="8.05" height="5.55" fill="rgb(162,162,162)"/><rect x="289.0" y="530.2" width="8.05" height="5.55" fill="rgb(195,195,195)"/><rect x="297.0" y="519.2" width="8.05" height="5.55" fill="rgb(203,203,203)"/><rect x="297.0" y="524.7" width="8.05" height="5.55" fill="rgb(152,152,152)"/><rect x="297.0" y="530.2" width="8.05" height="5.55" fill="rgb(209,209,209)"/><rect x="305.0" y="524.7" width="8.05" height="5.55" fill="rgb(157,157,157)"/><rect x="305.0" y="530.2" width="8.05" height="5.55" fill="rgb(212,212,212)"/><rect x="313.0" y="519.2" width="8.05" height="5.55" fill="rgb(201,201,201)"/><rect x="313.0" y="524.7" width="8.05" height="5.55" fill="rgb(163,163,163)"/><rect x="313.0" y="530.2" width="8.05" height="5.55" fill="rgb(204,204,204)"/><rect x="321.0" y="519.2" width="8.05" height="5.55" fill="rgb(189,189,189)"/><rect x="321.0" y="524.7" width="8.05" height="5.55" fill="rgb(161,161,161)"/><rect x="329.0" y="524.7" width="1.55" height="5.55" fill="rgb(177,177,177)"/><rect x="329.0" y="530.2" width="1.55" height="5.55" fill="rgb(205,205,205)"/><rect x="459.0" y="519.2" width="8.05" height="5.55" fill="rgb(207,207,207)"/><rect x="459.0" y="524.7" width="8.05" height="5.55" fill="rgb(188,188,188)"/><rect x="459.0" y="530.2" width="8.05" height="5.55" fill="rgb(224,224,224)"/><rect x="467.0" y="519.2" width="8.05" height="5.55" fill="rgb(226,226,226)"/><rect x="467.0" y="524.7" width="8.05" height="5.55" fill="rgb(185,185,185)"/><rect x="467.0" y="530.2" width="8.05" height="5.55" fill="rgb(216,216,216)"/><rect x="475.0" y="519.2" width="8.05" height="5.55" fill="rgb(206,206,206)"/><rect x="475.0" y="524.7" width="8.05" height="5.55" fill="rgb(181,181,181)"/><rect x="475.0" y="530.2" width="8.05" height="5.55" fill="rgb(205,205,205)"/><rect x="483.0" y="519.2" width="8.05" height="5.55" fill="rgb(214,214,214)"/><rect x="483.0" y="524.7" width="8.05" height="5.55" fill="rgb(163,163,163)"/><rect x="483.0" y="530.2" width="8.05" height="5.55" fill="rgb(197,197,197)"/><rect x="491.0" y="524.7" width="8.05" height="5.55" fill="rgb(176,176,176)"/><rect x="491.0" y="530.2" width="8.05" height="5.55" fill="rgb(200,200,200)"/><rect x="499.0" y="524.7" width="8.05" height="5.55" fill="rgb(184,184,184)"/><rect x="499.0" y="530.2" width="8.05" height="5.55" fill="rgb(215,215,215)"/><rect x="507.0" y="519.2" width="8.05" height="5.55" fill="rgb(210,210,210)"/><rect x="507.0" y="524.7" width="8.05" height="5.55" fill="rgb(162,162,162)"/><rect x="507.0" y="530.2" width="8.05" height="5.55" fill="rgb(207,207,207)"/><rect x="515.0" y="519.2" width="8.05" height="5.55" fill="rgb(192,192,192)"/><rect x="515.0" y="524.7" width="8.05" height="5.55" fill="rgb(176,176,176)"/><rect x="515.0" y="530.2" width="8.05" height="5.55" fill="rgb(218,218,218)"/><rect x="523.0" y="519.2" width="8.05" height="5.55" fill="rgb(227,227,227)"/><rect x="523.0" y="524.7" width="8.05" height="5.55" fill="rgb(180,180,180)"/><rect x="523.0" y="530.2" width="8.05" height="5.55" fill="rgb(216,216,216)"/><rect x="531.0" y="519.2" width="2.55" height="5.55" fill="rgb(203,203,203)"/><rect x="531.0" y="524.7" width="2.55" height="5.55" fill="rgb(160,160,160)"/><rect x="531.0" y="530.2" width="2.55" height="5.55" fill="rgb(202,202,202)"/><rect x="639.0" y="519.2" width="8.05" height="5.55" fill="rgb(224,224,224)"/><rect x="639.0" y="524.7" width="8.05" height="5.55" fill="rgb(172,172,172)"/><rect x="639.0" y="530.2" width="8.05" height="5.55" fill="rgb(197,197,197)"/><rect x="647.0" y="524.7" width="8.05" height="5.55" fill="rgb(165,165,165)"/><rect x="647.0" y="530.2" width="8.05" height="5.55" fill="rgb(234,234,234)"/><rect x="655.0" y="524.7" width="8.05" height="5.55" fill="rgb(161,161,161)"/><rect x="655.0" y="530.2" width="8.05" height="5.55" fill="rgb(211,211,211)"/><rect x="663.0" y="524.7" width="8.05" height="5.55" fill="rgb(193,193,193)"/><rect x="663.0" y="530.2" width="8.05" height="5.55" fill="rgb(206,206,206)"/><rect x="671.0" y="519.2" width="8.05" height="5.55" fill="rgb(216,216,216)"/><rect x="671.0" y="524.7" width="8.05" height="5.55" fill="rgb(180,180,180)"/><rect x="671.0" y="530.2" width="8.05" height="5.55" fill="rgb(228,228,228)"/><rect x="679.0" y="519.2" width="8.05" height="5.55" fill="rgb(201,201,201)"/><rect x="679.0" y="524.7" width="8.05" height="5.55" fill="rgb(162,162,162)"/><rect x="679.0" y="530.2" width="8.05" height="5.55" fill="rgb(229,229,229)"/><rect x="687.0" y="519.2" width="1.55" height="5.55" fill="rgb(224,224,224)"/><rect x="687.0" y="524.7" width="1.55" height="5.55" fill="rgb(168,168,168)"/><rect x="687.0" y="530.2" width="1.55" height="5.55" fill="rgb(229,229,229)"/><rect x="281.0" y="560.9" width="8.05" height="5.55" fill="rgb(189,189,189)"/><rect x="281.0" y="566.4" width="8.05" height="5.55" fill="rgb(188,188,188)"/><rect x="281.0" y="571.9" width="8.05" height="5.55" fill="rgb(207,207,207)"/><rect x="289.0" y="566.4" width="8.05" height="5.55" fill="rgb(147,147,147)"/><rect x="289.0" y="571.9" width="8.05" height="5.55" fill="rgb(216,216,216)"/><rect x="297.0" y="560.9" width="8.05" height="5.55" fill="rgb(212,212,212)"/><rect x="297.0" y="566.4" width="8.05" height="5.55" fill="rgb(173,173,173)"/><rect x="297.0" y="571.9" width="8.05" height="5.55" fill="rgb(194,194,194)"/><rect x="305.0" y="560.9" width="8.05" height="5.55" fill="rgb(203,203,203)"/><rect x="305.0" y="566.4" width="8.05" height="5.55" fill="rgb(176,176,176)"/><rect x="305.0" y="571.9" width="8.05" height="5.55" fill="rgb(222,222,222)"/><rect x="313.0" y="560.9" width="8.05" height="5.55" fill="rgb(220,220,220)"/><rect x="313.0" y="566.4" width="8.05" height="5.55" fill="rgb(179,179,179)"/><rect x="321.0" y="560.9" width="8.05" height="5.55" fill="rgb(218,218,218)"/><rect x="321.0" y="566.4" width="8.05" height="5.55" fill="rgb(161,161,161)"/><rect x="321.0" y="571.9" width="8.05" height="5.55" fill="rgb(209,209,209)"/><rect x="329.0" y="560.9" width="1.55" height="5.55" fill="rgb(201,201,201)"/><rect x="329.0" y="566.4" width="1.55" height="5.55" fill="rgb(159,159,159)"/><rect x="329.0" y="571.9" width="1.55" height="5.55" fill="rgb(222,222,222)"/><rect x="459.0" y="560.9" width="8.05" height="5.55" fill="rgb(216,216,216)"/><rect x="459.0" y="566.4" width="8.05" height="5.55" fill="rgb(164,164,164)"/><rect x="459.0" y="571.9" width="8.05" height="5.55" fill="rgb(215,215,215)"/><rect x="467.0" y="560.9" width="8.05" height="5.55" fill="rgb(204,204,204)"/><rect x="467.0" y="566.4" width="8.05" height="5.55" fill="rgb(164,164,164)"/><rect x="467.0" y="571.9" width="8.05" height="5.55" fill="rgb(218,218,218)"/><rect x="475.0" y="560.9" width="8.05" height="5.55" fill="rgb(211,211,211)"/><rect x="475.0" y="566.4" width="8.05" height="5.55" fill="rgb(199,199,199)"/><rect x="475.0" y="571.9" width="8.05" height="5.55" fill="rgb(197,197,197)"/><rect x="483.0" y="560.9" width="8.05" height="5.55" fill="rgb(223,223,223)"/><rect x="483.0" y="566.4" width="8.05" height="5.55" fill="rgb(177,177,177)"/><rect x="483.0" y="571.9" width="8.05" height="5.55" fill="rgb(203,203,203)"/><rect x="491.0" y="560.9" width="8.05" height="5.55" fill="rgb(223,223,223)"/><rect x="491.0" y="566.4" width="8.05" height="5.55" fill="rgb(178,178,178)"/><rect x="491.0" y="571.9" width="8.05" height="5.55" fill="rgb(215,215,215)"/><rect x="499.0" y="560.9" width="8.05" height="5.55" fill="rgb(221,221,221)"/><rect x="499.0" y="566.4" width="8.05" height="5.55" fill="rgb(167,167,167)"/><rect x="499.0" y="571.9" width="8.05" height="5.55" fill="rgb(232,232,232)"/><rect x="507.0" y="560.9" width="8.05" height="5.55" fill="rgb(197,197,197)"/><rect x="507.0" y="566.4" width="8.05" height="5.55" fill="rgb(190,190,190)"/><rect x="515.0" y="560.9" width="8.05" height="5.55" fill="rgb(224,224,224)"/><rect x="515.0" y="566.4" width="8.05" height="5.55" fill="rgb(188,188,188)"/><rect x="515.0" y="571.9" width="8.05" height="5.55" fill="rgb(221,221,221)"/><rect x="523.0" y="560.9" width="8.05" height="5.55" fill="rgb(205,205,205)"/><rect x="523.0" y="566.4" width="8.05" height="5.55" fill="rgb(164,164,164)"/><rect x="523.0" y="571.9" width="8.05" height="5.55" fill="rgb(206,206,206)"/><rect x="531.0" y="560.9" width="2.55" height="5.55" fill="rgb(208,208,208)"/><rect x="531.0" y="566.4" width="2.55" height="5.55" fill="rgb(183,183,183)"/><rect x="531.0" y="571.9" width="2.55" height="5.55" fill="rgb(229,229,229)"/><rect x="639.0" y="560.9" width="8.05" height="5.55" fill="rgb(199,199,199)"/><rect x="639.0" y="566.4" width="8.05" height="5.55" fill="rgb(183,183,183)"/><rect x="639.0" y="571.9" width="8.05" height="5.55" fill="rgb(228,228,228)"/><rect x="647.0" y="560.9" width="8.05" height="5.55" fill="rgb(202,202,202)"/><rect x="647.0" y="566.4" width="8.05" height="5.55" fill="rgb(160,160,160)"/><rect x="647.0" y="571.9" width="8.05" height="5.55" fill="rgb(225,225,225)"/><rect x="655.0" y="560.9" width="8.05" height="5.55" fill="rgb(201,201,201)"/><rect x="655.0" y="566.4" width="8.05" height="5.55" fill="rgb(186,186,186)"/><rect x="655.0" y="571.9" width="8.05" height="5.55" fill="rgb(217,217,217)"/><rect x="663.0" y="560.9" width="8.05" height="5.55" fill="rgb(213,213,213)"/><rect x="663.0" y="566.4" width="8.05" height="5.55" fill="rgb(160,160,160)"/><rect x="663.0" y="571.9" width="8.05" height="5.55" fill="rgb(218,218,218)"/><rect x="671.0" y="560.9" width="8.05" height="5.55" fill="rgb(199,199,199)"/><rect x="671.0" y="566.4" width="8.05" height="5.55" fill="rgb(172,172,172)"/><rect x="671.0" y="571.9" width="8.05" height="5.55" fill="rgb(215,215,215)"/><rect x="679.0" y="560.9" width="8.05" height="5.55" fill="rgb(196,196,196)"/><rect x="679.0" y="566.4" width="8.05" height="5.55" fill="rgb(185,185,185)"/><rect x="679.0" y="571.9" width="8.05" height="5.55" fill="rgb(234,234,234)"/><rect x="687.0" y="566.4" width="1.55" height="5.55" fill="rgb(187,187,187)"/><rect x="687.0" y="571.9" width="1.55" height="5.55" fill="rgb(200,200,200)"/><rect x="281.0" y="602.6" width="8.05" height="5.55" fill="rgb(191,191,191)"/><rect x="281.0" y="608.1" width="8.05" height="5.55" fill="rgb(187,187,187)"/><rect x="281.0" y="613.6" width="8.05" height="5.55" fill="rgb(202,202,202)"/><rect x="289.0" y="602.6" width="8.05" height="5.55" fill="rgb(205,205,205)"/><rect x="289.0" y="608.1" width="8.05" height="5.55" fill="rgb(172,172,172)"/><rect x="289.0" y="613.6" width="8.05" height="5.55" fill="rgb(205,205,205)"/><rect x="297.0" y="602.6" width="8.05" height="5.55" fill="rgb(215,215,215)"/><rect x="297.0" y="608.1" width="8.05" height="5.55" fill="rgb(146,146,146)"/><rect x="297.0" y="613.6" width="8.05" height="5.55" fill="rgb(218,218,218)"/><rect x="305.0" y="602.6" width="8.05" height="5.55" fill="rgb(223,223,223)"/><rect x="305.0" y="608.1" width="8.05" height="5.55" fill="rgb(180,180,180)"/><rect x="305.0" y="613.6" width="8.05" height="5.55" fill="rgb(198,198,198)"/><rect x="313.0" y="608.1" width="8.05" height="5.55" fill="rgb(191,191,191)"/><rect x="313.0" y="613.6" width="8.05" height="5.55" fill="rgb(201,201,201)"/><rect x="321.0" y="602.6" width="8.05" height="5.55" fill="rgb(206,206,206)"/><rect x="321.0" y="608.1" width="8.05" height="5.55" fill="rgb(176,176,176)"/><rect x="329.0" y="602.6" width="1.55" height="5.55" fill="rgb(196,196,196)"/><rect x="329.0" y="608.1" width="1.55" height="5.55" fill="rgb(155,155,155)"/><rect x="329.0" y="613.6" width="1.55" height="5.55" fill="rgb(214,214,214)"/><rect x="459.0" y="602.6" width="8.05" height="5.55" fill="rgb(208,208,208)"/><rect x="459.0" y="608.1" width="8.05" height="5.55" fill="rgb(176,176,176)"/><rect x="459.0" y="613.6" width="8.05" height="5.55" fill="rgb(212,212,212)"/><rect x="467.0" y="602.6" width="8.05" height="5.55" fill="rgb(227,227,227)"/><rect x="467.0" y="608.1" width="8.05" height="5.55" fill="rgb(185,185,185)"/><rect x="467.0" y="613.6" width="8.05" height="5.55" fill="rgb(207,207,207)"/><rect x="475.0" y="608.1" width="8.05" height="5.55" fill="rgb(192,192,192)"/><rect x="475.0" y="613.6" width="8.05" height="5.55" fill="rgb(228,228,228)"/><rect x="483.0" y="602.6" width="8.05" height="5.55" fill="rgb(220,220,220)"/><rect x="483.0" y="608.1" width="8.05" height="5.55" fill="rgb(181,181,181)"/><rect x="483.0" y="613.6" width="8.05" height="5.55" fill="rgb(225,225,225)"/><rect x="491.0" y="602.6" width="8.05" height="5.55" fill="rgb(227,227,227)"/><rect x="491.0" y="608.1" width="8.05" height="5.55" fill="rgb(172,172,172)"/><rect x="491.0" y="613.6" width="8.05" height="5.55" fill="rgb(208,208,208)"/><rect x="499.0" y="602.6" width="8.05" height="5.55" fill="rgb(197,197,197)"/><rect x="499.0" y="608.1" width="8.05" height="5.55" fill="rgb(180,180,180)"/><rect x="499.0" y="613.6" width="8.05" height="5.55" fill="rgb(213,213,213)"/><rect x="507.0" y="602.6" width="8.05" height="5.55" fill="rgb(204,204,204)"/><rect x="507.0" y="608.1" width="8.05" height="5.55" fill="rgb(161,161,161)"/><rect x="507.0" y="613.6" width="8.05" height="5.55" fill="rgb(223,223,223)"/><rect x="515.0" y="602.6" width="8.05" height="5.55" fill="rgb(225,225,225)"/><rect x="515.0" y="608.1" width="8.05" height="5.55" fill="rgb(173,173,173)"/><rect x="515.0" y="613.6" width="8.05" height="5.55" fill="rgb(218,218,218)"/><rect x="523.0" y="602.6" width="8.05" height="5.55" fill="rgb(223,223,223)"/><rect x="523.0" y="608.1" width="8.05" height="5.55" fill="rgb(177,177,177)"/><rect x="523.0" y="613.6" width="8.05" height="5.55" fill="rgb(220,220,220)"/><rect x="531.0" y="602.6" width="2.55" height="5.55" fill="rgb(224,224,224)"/><rect x="531.0" y="608.1" width="2.55" height="5.55" fill="rgb(193,193,193)"/><rect x="531.0" y="613.6" width="2.55" height="5.55" fill="rgb(210,210,210)"/><rect x="639.0" y="608.1" width="8.05" height="5.55" fill="rgb(175,175,175)"/><rect x="639.0" y="613.6" width="8.05" height="5.55" fill="rgb(225,225,225)"/><rect x="647.0" y="602.6" width="8.05" height="5.55" fill="rgb(211,211,211)"/><rect x="647.0" y="608.1" width="8.05" height="5.55" fill="rgb(161,161,161)"/><rect x="647.0" y="613.6" width="8.05" height="5.55" fill="rgb(224,224,224)"/><rect x="655.0" y="602.6" width="8.05" height="5.55" fill="rgb(222,222,222)"/><rect x="655.0" y="608.1" width="8.05" height="5.55" fill="rgb(197,197,197)"/><rect x="655.0" y="613.6" width="8.05" height="5.55" fill="rgb(201,201,201)"/><rect x="663.0" y="602.6" width="8.05" height="5.55" fill="rgb(225,225,225)"/><rect x="663.0" y="608.1" width="8.05" height="5.55" fill="rgb(189,189,189)"/><rect x="663.0" y="613.6" width="8.05" height="5.55" fill="rgb(212,212,212)"/><rect x="671.0" y="602.6" width="8.05" height="5.55" fill="rgb(206,206,206)"/><rect x="671.0" y="608.1" width="8.05" height="5.55" fill="rgb(169,169,169)"/><rect x="671.0" y="613.6" width="8.05" height="5.55" fill="rgb(203,203,203)"/><rect x="679.0" y="602.6" width="8.05" height="5.55" fill="rgb(221,221,221)"/><rect x="679.0" y="608.1" width="8.05" height="5.55" fill="rgb(165,165,165)"/><rect x="679.0" y="613.6" width="8.05" height="5.55" fill="rgb(199,199,199)"/><rect x="687.0" y="608.1" width="1.55" height="5.55" fill="rgb(168,168,168)"/><rect x="687.0" y="613.6" width="1.55" height="5.55" fill="rgb(199,199,199)"/><rect x="281.0" y="644.2" width="8.05" height="5.55" fill="rgb(207,207,207)"/><rect x="281.0" y="649.7" width="8.05" height="5.55" fill="rgb(153,153,153)"/><rect x="281.0" y="655.2" width="8.05" height="5.55" fill="rgb(226,226,226)"/><rect x="289.0" y="644.2" width="8.05" height="5.55" fill="rgb(195,195,195)"/><rect x="289.0" y="649.7" width="8.05" height="5.55" fill="rgb(151,151,151)"/><rect x="297.0" y="644.2" width="8.05" height="5.55" fill="rgb(225,225,225)"/><rect x="297.0" y="649.7" width="8.05" height="5.55" fill="rgb(157,157,157)"/><rect x="297.0" y="655.2" width="8.05" height="5.55" fill="rgb(207,207,207)"/><rect x="305.0" y="644.2" width="8.05" height="5.55" fill="rgb(188,188,188)"/><rect x="305.0" y="649.7" width="8.05" height="5.55" fill="rgb(145,145,145)"/><rect x="305.0" y="655.2" width="8.05" height="5.55" fill="rgb(222,222,222)"/><rect x="313.0" y="644.2" width="8.05" height="5.55" fill="rgb(208,208,208)"/><rect x="313.0" y="649.7" width="8.05" height="5.55" fill="rgb(186,186,186)"/><rect x="313.0" y="655.2" width="8.05" height="5.55" fill="rgb(208,208,208)"/><rect x="321.0" y="644.2" width="8.05" height="5.55" fill="rgb(203,203,203)"/><rect x="321.0" y="649.7" width="8.05" height="5.55" fill="rgb(180,180,180)"/><rect x="321.0" y="655.2" width="8.05" height="5.55" fill="rgb(219,219,219)"/><rect x="329.0" y="644.2" width="1.55" height="5.55" fill="rgb(207,207,207)"/><rect x="329.0" y="649.7" width="1.55" height="5.55" fill="rgb(148,148,148)"/><rect x="459.0" y="644.2" width="8.05" height="5.55" fill="rgb(218,218,218)"/><rect x="459.0" y="649.7" width="8.05" height="5.55" fill="rgb(165,165,165)"/><rect x="459.0" y="655.2" width="8.05" height="5.55" fill="rgb(224,224,224)"/><rect x="467.0" y="644.2" width="8.05" height="5.55" fill="rgb(206,206,206)"/><rect x="467.0" y="649.7" width="8.05" height="5.55" fill="rgb(191,191,191)"/><rect x="475.0" y="644.2" width="8.05" height="5.55" fill="rgb(218,218,218)"/><rect x="475.0" y="649.7" width="8.05" height="5.55" fill="rgb(183,183,183)"/><rect x="475.0" y="655.2" width="8.05" height="5.55" fill="rgb(209,209,209)"/><rect x="483.0" y="649.7" width="8.05" height="5.55" fill="rgb(178,178,178)"/><rect x="483.0" y="655.2" width="8.05" height="5.55" fill="rgb(229,229,229)"/><rect x="491.0" y="649.7" width="8.05" height="5.55" fill="rgb(191,191,191)"/><rect x="491.0" y="655.2" width="8.05" height="5.55" fill="rgb(216,216,216)"/><rect x="499.0" y="644.2" width="8.05" height="5.55" fill="rgb(204,204,204)"/><rect x="499.0" y="649.7" width="8.05" height="5.55" fill="rgb(174,174,174)"/><rect x="499.0" y="655.2" width="8.05" height="5.55" fill="rgb(213,213,213)"/><rect x="507.0" y="644.2" width="8.05" height="5.55" fill="rgb(210,210,210)"/><rect x="507.0" y="649.7" width="8.05" height="5.55" fill="rgb(166,166,166)"/><rect x="507.0" y="655.2" width="8.05" height="5.55" fill="rgb(228,228,228)"/><rect x="515.0" y="644.2" width="8.05" height="5.55" fill="rgb(206,206,206)"/><rect x="515.0" y="649.7" width="8.05" height="5.55" fill="rgb(191,191,191)"/><rect x="515.0" y="655.2" width="8.05" height="5.55" fill="rgb(200,200,200)"/><rect x="523.0" y="644.2" width="8.05" height="5.55" fill="rgb(201,201,201)"/><rect x="523.0" y="649.7" width="8.05" height="5.55" fill="rgb(185,185,185)"/><rect x="531.0" y="649.7" width="2.55" height="5.55" fill="rgb(198,198,198)"/><rect x="531.0" y="655.2" width="2.55" height="5.55" fill="rgb(200,200,200)"/><rect x="639.0" y="644.2" width="8.05" height="5.55" fill="rgb(203,203,203)"/><rect x="639.0" y="649.7" width="8.05" height="5.55" fill="rgb(185,185,185)"/><rect x="639.0" y="655.2" width="8.05" height="5.55" fill="rgb(217,217,217)"/><rect x="647.0" y="644.2" width="8.05" height="5.55" fill="rgb(197,197,197)"/><rect x="647.0" y="649.7" width="8.05" height="5.55" fill="rgb(170,170,170)"/><rect x="647.0" y="655.2" width="8.05" height="5.55" fill="rgb(208,208,208)"/><rect x="655.0" y="644.2" width="8.05" height="5.55" fill="rgb(225,225,225)"/><rect x="655.0" y="649.7" width="8.05" height="5.55" fill="rgb(189,189,189)"/><rect x="663.0" y="644.2" width="8.05" height="5.55" fill="rgb(216,216,216)"/><rect x="663.0" y="649.7" width="8.05" height="5.55" fill="rgb(183,183,183)"/><rect x="663.0" y="655.2" width="8.05" height="5.55" fill="rgb(225,225,225)"/><rect x="671.0" y="644.2" width="8.05" height="5.55" fill="rgb(192,192,192)"/><rect x="671.0" y="649.7" width="8.05" height="5.55" fill="rgb(165,165,165)"/><rect x="671.0" y="655.2" width="8.05" height="5.55" fill="rgb(219,219,219)"/><rect x="679.0" y="644.2" width="8.05" height="5.55" fill="rgb(199,199,199)"/><rect x="679.0" y="649.7" width="8.05" height="5.55" fill="rgb(195,195,195)"/><rect x="679.0" y="655.2" width="8.05" height="5.55" fill="rgb(210,210,210)"/><rect x="687.0" y="644.2" width="1.55" height="5.55" fill="rgb(211,211,211)"/><rect x="687.0" y="649.7" width="1.55" height="5.55" fill="rgb(187,187,187)"/></g></svg>
<!-- scrollbar -->
<div class="a" style="left:1249px;top:340px;width:11px;height:317px;background:#f1f1f1"></div>
<div class="a" style="left:1250.5px;top:351px;width:7.8px;height:185px;background:#c4c4c4"></div>
<svg style="left:1251.5px;top:344px" width="6" height="4" viewBox="0 0 6 4"><path d="M0 4 L3 0 L6 4 Z" fill="#777"/></svg>
<svg style="left:1251.5px;top:648px" width="6" height="4" viewBox="0 0 6 4"><path d="M0 0 L3 4 L6 0 Z" fill="#666"/></svg>

<!-- menu -->
<div class="a" style="left:1102px;top:215px;width:140px;height:254px;background:#fff;border-radius:4px;box-shadow:0 3px 8px rgba(0,0,0,.2),0 0 2px rgba(0,0,0,.08)"></div>
<div class="hl" style="left:1101.3px;top:383px;width:142.4px;height:35.7px"></div>
<div class="hl" style="left:1201.1px;top:469px;width:48.6px;height:35.7px"></div>

<!-- FAB -->
<div class="a" style="left:1220px;top:659.6px;width:46.6px;height:46.6px;border-radius:50%;background:#0678a4;box-shadow:0 2px 5px rgba(0,0,0,.25)"></div>
<svg style="left:1237.3px;top:677px" width="12" height="12" viewBox="0 0 12 12"><path d="M6 0 V12 M0 6 H12" stroke="#fff" stroke-width="2"/></svg>

<!-- texts -->
<div id="logo" class="t" style="left:41.90px;top:12.75px;font-size:22px;color:#474747;font-weight:normal;letter-spacing:-0.245px;">ClassPad.net</div>
<div id="acct" class="t" style="left:1192.00px;top:11.30px;font-size:10px;color:#777;font-weight:normal;letter-spacing:-0.525px;">学校IDアカウント</div>
<div id="exword" class="t" style="left:39.60px;top:69.42px;font-size:16px;color:#fff;font-weight:bold;letter-spacing:-0.433px;">EX-word</div>
<div id="tools" class="t" style="left:40.25px;top:116.25px;font-size:16px;color:#fff;font-weight:bold;letter-spacing:-0.712px;">Tools</div>
<div id="jlbl" class="t" style="left:12.50px;top:158.00px;font-size:12px;color:#aab4d6;font-weight:normal;letter-spacing:1.500px;">授業</div>
<div id="gakunen" class="t" style="left:40.40px;top:191.10px;font-size:13.33px;color:#fff;font-weight:normal;letter-spacing:0.200px;-webkit-text-stroke-width:0.3px">1学年担当授業</div>
<div id="jishu" class="t" style="left:12.80px;top:225.00px;font-size:13.33px;color:#fff;font-weight:normal;letter-spacing:0.667px;-webkit-text-stroke-width:0.3px">自主学習</div>
<div id="izen" class="t" style="left:13.00px;top:258.50px;font-size:13.33px;color:#fff;font-weight:normal;letter-spacing:0.500px;-webkit-text-stroke-width:0.3px">以前の授業</div>
<div id="lic" class="t" style="left:40.60px;top:306.20px;font-size:13.33px;color:#fff;font-weight:normal;letter-spacing:-0.400px;-webkit-text-stroke-width:0.3px">あなたのライセンス</div>
<div id="admin" class="t" style="left:42.80px;top:358.20px;font-size:13.33px;color:#fff;font-weight:normal;letter-spacing:-0.467px;-webkit-text-stroke-width:0.3px">管理者メニュー</div>
<div id="sensei" class="t" style="left:55.80px;top:397.60px;font-size:13.33px;color:#fff;font-weight:normal;letter-spacing:0.067px;-webkit-text-stroke-width:0.3px">先生管理</div>
<div id="seito" class="t" style="left:55.60px;top:437.00px;font-size:13.33px;color:#fff;font-weight:normal;letter-spacing:0.333px;-webkit-text-stroke-width:0.3px">生徒管理</div>
<div id="cls" class="t" style="left:54.60px;top:476.70px;font-size:13.33px;color:#fff;font-weight:normal;letter-spacing:-0.400px;-webkit-text-stroke-width:0.3px">クラス管理</div>
<div id="jkanri" class="t" style="left:55.00px;top:517.80px;font-size:13.33px;color:#fff;font-weight:normal;letter-spacing:0.533px;-webkit-text-stroke-width:0.3px">授業管理</div>
<div id="gaibu" class="t" style="left:55.60px;top:557.80px;font-size:13.33px;color:#fff;font-weight:normal;letter-spacing:-0.029px;-webkit-text-stroke-width:0.3px">外部サービス連携</div>
<div id="nendo" class="t" style="left:27.00px;top:597.50px;font-size:13.33px;color:#fff;font-weight:normal;letter-spacing:0.333px;-webkit-text-stroke-width:0.3px">年度処理</div>
<div id="gakko" class="t" style="left:27.00px;top:637.00px;font-size:13.33px;color:#fff;font-weight:normal;letter-spacing:-0.309px;-webkit-text-stroke-width:0.3px">学校情報と所有ライセンス</div>
<div id="title" class="t" style="left:267.40px;top:68.85px;font-size:15.33px;color:#333;font-weight:normal;letter-spacing:0.533px;">先生管理</div>
<div id="shibori" class="t" style="left:270.70px;top:115.50px;font-size:13.33px;color:#333;font-weight:normal;letter-spacing:0.100px;">絞り込み</div>
<div id="clear" class="t" style="left:1206.70px;top:116.30px;font-size:12px;color:#9aa0a8;font-weight:normal;letter-spacing:-1.450px;">クリア</div>
<div id="yakulbl" class="t" style="left:772.60px;top:165.15px;font-size:12px;color:#6b6f78;font-weight:normal;letter-spacing:-0.200px;">役割と管理権限</div>
<div id="joken1" class="t" style="left:890.80px;top:165.45px;font-size:13.33px;color:#222;font-weight:normal;letter-spacing:-1.367px;">条件なし</div>
<div id="kw" class="t" style="left:253.40px;top:212.10px;font-size:12px;color:#6b6f78;font-weight:normal;letter-spacing:-0.850px;">キーワード</div>
<div id="ph" class="t" style="left:343.70px;top:211.85px;font-size:13.33px;color:#a8a8a8;font-weight:normal;letter-spacing:0.364px;">氏名・フリガナ・個人ID</div>
<div id="jotailbl" class="t" style="left:831.20px;top:211.30px;font-size:12px;color:#6b6f78;font-weight:normal;letter-spacing:-0.800px;">状態</div>
<div id="joken2" class="t" style="left:890.80px;top:211.85px;font-size:13.33px;color:#222;font-weight:normal;letter-spacing:-1.367px;">条件なし</div>
<div id="ikkatsu" class="t" style="left:240.70px;top:268.95px;font-size:12px;color:#c4c4c4;font-weight:normal;letter-spacing:0.200px;">一括処理</div>
<div id="import" class="t" style="left:308.70px;top:268.95px;font-size:12px;color:#222;font-weight:normal;letter-spacing:-1.100px;">インポート</div>
<div id="sentaku" class="t" style="left:905.70px;top:277.60px;font-size:12px;color:#444;font-weight:normal;letter-spacing:-0.300px;">選択中の先生を全て表示</div>
<div id="sen" class="t" style="left:1091.00px;top:278.00px;font-size:12px;color:#555;font-weight:normal;letter-spacing:0.000px;">選</div>
<div id="twelve" class="t" style="left:1246.50px;top:278.50px;font-size:12px;color:#777;font-weight:normal;letter-spacing:0.200px;">12</div>
<div id="h_name" class="t" style="left:280.60px;top:314.80px;font-size:12px;color:#555;font-weight:normal;letter-spacing:1.200px;">氏名</div>
<div id="h_kana" class="t" style="left:459.10px;top:314.30px;font-size:12px;color:#555;font-weight:normal;letter-spacing:-1.600px;">フリガナ</div>
<div id="h_id" class="t" style="left:639.10px;top:314.10px;font-size:12px;color:#555;font-weight:normal;letter-spacing:-0.333px;">個人ID</div>
<div id="h_role" class="t" style="left:800.00px;top:315.15px;font-size:12px;color:#555;font-weight:normal;letter-spacing:1.100px;">役割</div>
<div id="h_stat" class="t" style="left:963.00px;top:315.15px;font-size:12px;color:#555;font-weight:normal;letter-spacing:-0.600px;">状態</div>
<div id="m1" class="t" style="left:1114.80px;top:235.40px;font-size:13.33px;color:#2b2b2b;font-weight:normal;letter-spacing:1.500px;">変更</div>
<div id="m2" class="t" style="left:1115.80px;top:274.90px;font-size:13.33px;color:#2b2b2b;font-weight:normal;letter-spacing:0.900px;">削除</div>
<div id="m3" class="t" style="left:1115.80px;top:315.15px;font-size:13.33px;color:#2b2b2b;font-weight:normal;letter-spacing:-0.329px;">パスワード初期化</div>
<div id="m4" class="t" style="left:1114.80px;top:355.15px;font-size:13.33px;color:#2b2b2b;font-weight:normal;letter-spacing:-0.583px;">ライセンス付与</div>
<div id="m5" class="t" style="left:1114.80px;top:395.40px;font-size:13.33px;color:#2b2b2b;font-weight:normal;letter-spacing:-0.312px;">所有ライセンス一覧</div>
<div id="m6" class="t" style="left:1115.80px;top:435.15px;font-size:13.33px;color:#2b2b2b;font-weight:normal;letter-spacing:0.500px;">転出処理</div>
</body>
</html>
